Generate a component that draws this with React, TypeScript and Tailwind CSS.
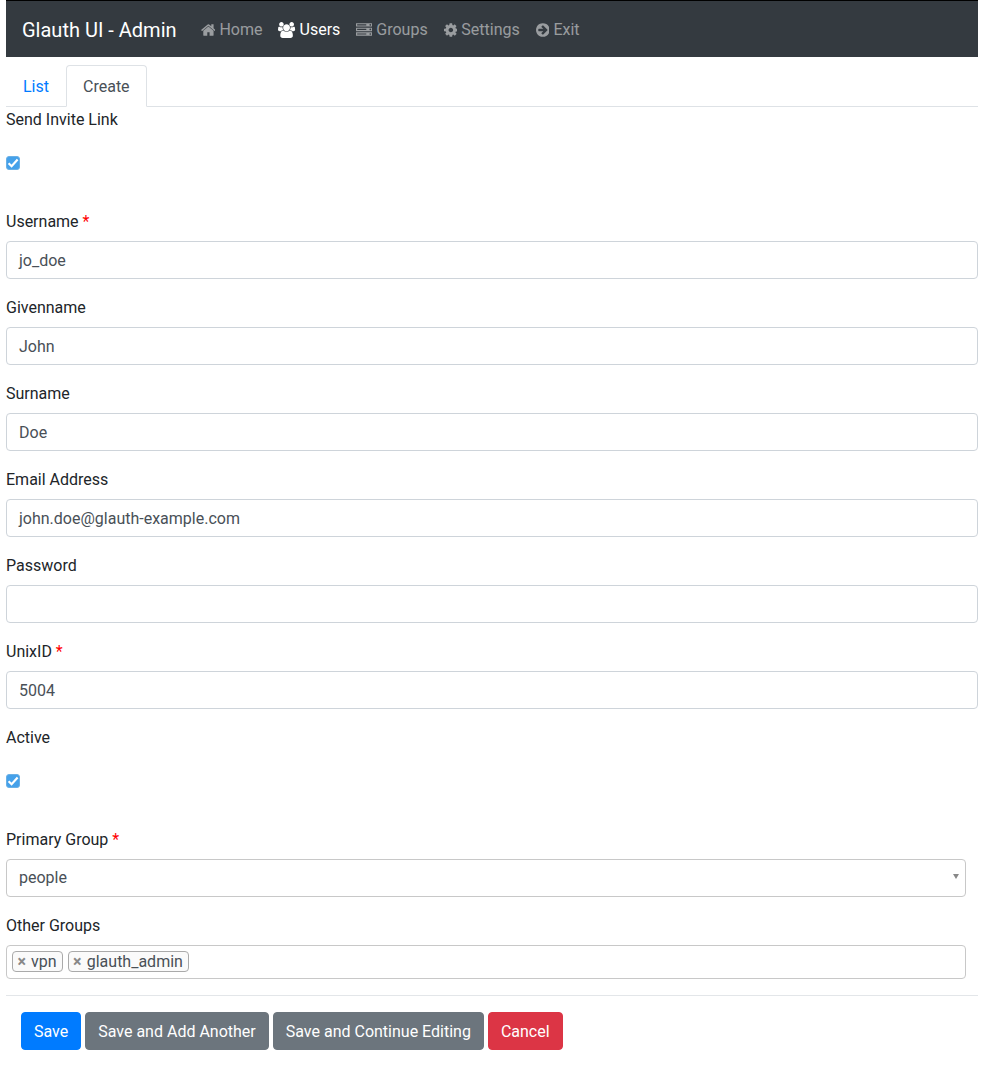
function Label({ text, req }: { text: string; req?: boolean }) {
  return (
    <label className="mb-2 block h-6 pt-[1px] leading-6">
      {text}
      {req && <span className="text-[#ff0000]"> *</span>}
    </label>
  );
}

function Field({ label, value, req }: { label: string; value: string; req?: boolean }) {
  return (
    <div className="mb-4">
      <Label text={label} req={req} />
      <div className="flex h-[38px] items-center rounded border border-[#ced4da] bg-white px-3 pt-[2px] text-[#495057]">
        {value}
      </div>
    </div>
  );
}

function Check({ label }: { label: string }) {
  return (
    <div className="mb-4">
      <Label text={label} />
      <div className="flex h-[54px] items-start pt-[17px]">
        <div className="relative h-[14px] w-[14px]">
          <input
            type="checkbox"
            defaultChecked
            className="m-0 block h-[14px] w-[14px] appearance-none rounded-[3px] border border-[#6ab0e6] bg-[#45a1ea]"
          />
          <svg viewBox="0 0 14 14" className="pointer-events-none absolute inset-0 h-[14px] w-[14px]">
            <path d="M2.6 7.2 L5.6 10.2 L11.6 3.6" fill="none" stroke="#ffffff" strokeWidth="2.2" />
          </svg>
        </div>
      </div>
    </div>
  );
}

function NavItem({ icon, text, active }: { icon: React.ReactNode; text: string; active?: boolean }) {
  return (
    <a className={`flex items-center gap-[3.97px] px-2 pt-[2px] ${active ? "text-white" : "text-[#ffffff80]"}`}>
      {icon}
      <span>{text}</span>
    </a>
  );
}

function Fa({ d, vb, w }: { d: string; vb: string; w: string }) {
  return (
    <svg viewBox={vb} className={`h-4 shrink-0 fill-current ${w}`}>
      <path d={d} />
    </svg>
  );
}

const HOME =
  "M1472 992v480q0 26-19 45t-45 19h-384v-384h-256v384h-384q-26 0-45-19t-19-45v-480q0-1 .5-3t.5-3l575-474 575 474q1 2 1 6zm223-69l-62 74q-8 9-21 11h-3q-13 0-21-7l-692-577-692 577q-12 8-24 7-13-2-21-11l-62-74q-8-10-7-23.500t11-21.500l719-599q32-26 76-26t76 26l244 204v-195q0-14 9-23t23-9h192q14 0 23 9t9 23v408l219 182q10 8 11 21.500t-7 23.500z";
const USERS =
  "M593 896q-162 5-265 128h-134q-82 0-138-40.500t-56-118.500q0-353 124-353 6 0 43.500 21t97.500 42.500 119 21.500q67 0 133-23-5 37-5 66 0 139 81 256zm1071 637q0 120-73 189.500t-194 69.500h-874q-121 0-194-69.500t-73-189.500q0-53 3.500-103.500t14-109 26.500-108.500 43-97.500 62-81 85.500-53.500 111.500-20q10 0 43 21.500t73 48 107 48 135 21.500 135-21.500 107-48 73-48 43-21.500q61 0 111.500 20t85.500 53.500 62 81 43 97.500 26.500 108.500 14 109 3.500 103.500zm-1024-1277q0 106-75 181t-181 75-181-75-75-181 75-181 181-75 181 75 75 181zm704 384q0 159-112.500 271.500t-271.500 112.500-271.500-112.500-112.500-271.500 112.500-271.500 271.500-112.500 271.500 112.500 112.500 271.500zm576 225q0 78-56 118.500t-138 40.500h-134q-103-123-265-128 81-117 81-256 0-29-5-66 66 23 133 23 59 0 119-21.500t97.500-42.500 43.500-21q124 0 124 353zm-128-609q0 106-75 181t-181 75-181-75-75-181 75-181 181-75 181 75 75 181z";
const SERVER =
  "M128 1408h1024v-128h-1024v128zm0-512h1024v-128h-1024v128zm1568 448q0-40-28-68t-68-28-68 28-28 68 28 68 68 28 68-28 28-68zm-1568-960h1024v-128h-1024v128zm1568 448q0-40-28-68t-68-28-68 28-28 68 28 68 68 28 68-28 28-68zm0-512q0-40-28-68t-68-28-68 28-28 68 28 68 68 28 68-28 28-68zm96 832v384h-1792v-384h1792zm0-512v384h-1792v-384h1792zm0-512v384h-1792v-384h1792z";
const COG =
  "M1152 896q0-106-75-181t-181-75-181 75-75 181 75 181 181 75 181-75 75-181zm512-109v222q0 12-8 23t-20 13l-185 28q-19 54-39 91 35 50 107 138 10 12 10 25t-9 23q-27 37-99 108t-94 71q-12 0-26-9l-138-108q-44 23-91 38-16 136-29 186-7 28-36 28h-222q-14 0-24.500-8.500t-11.500-21.500l-28-184q-49-16-90-37l-141 107q-10 9-25 9-14 0-25-11-126-114-165-168-7-10-7-23 0-12 8-23 15-21 51-66.500t54-70.500q-27-50-41-99l-183-27q-13-2-21-12.500t-8-23.500v-222q0-12 8-23t19-13l186-28q14-46 39-92-40-57-107-138-10-12-10-24 0-10 9-23 26-36 98.500-107.500t94.500-71.500q13 0 26 10l138 107q44-23 91-38 16-136 29-186 7-28 36-28h222q14 0 24.500 8.500t11.500 21.500l28 184q49 16 90 37l142-107q9-9 24-9 13 0 25 10 129 119 165 170 7 8 7 22 0 12-8 23-15 21-51 66.500t-54 70.500q26 50 41 98l183 28q13 2 21 12.500t8 23.500z";
const EXIT =
  "M1285 896q0-27-18-45l-91-91-362-362q-18-18-45-18t-45 18l-91 91q-18 18-18 45t18 45l189 189h-502q-26 0-45 19t-19 45v128q0 26 19 45t45 19h502l-189 189q-19 19-19 45t19 45l91 91q18 18 45 18t45-18l362-362 91-91q18-18 18-45zm251 0q0 209-103 385.500t-279.500 279.500-385.500 103-385.500-103-279.500-279.500-103-385.500 103-385.500 279.500-279.500 385.500-103 385.500 103 279.500 279.500 103 385.500z";

function Tag({ text }: { text: string }) {
  return (
    <span className="flex h-[21px] items-center rounded-[4px] border border-[#aaaaaa] bg-[#fafafa] pl-[4.4px] pr-[5px] text-[#495057]">
      <span className="mr-[5.2px] text-[16px] font-bold leading-none text-[#888888]">×</span>
      {text}
    </span>
  );
}

function Btn({ text, color }: { text: string; color: string }) {
  return <button className={`h-[38px] rounded border px-3 pt-[2px] text-white ${color}`}>{text}</button>;
}

export default function App() {
  return (
    <div className="min-h-[1066px] bg-white px-[6px] text-[16px] leading-6 text-[#212529] [font-family:Roboto,sans-serif]">
      <nav className="flex h-[57px] items-center border-t border-black bg-[#343a40] px-4">
        <span className="mr-4 pt-[2px] text-[20px] text-white">Glauth UI - Admin</span>
        <NavItem icon={<Fa d={HOME} vb="64 0 1664 1792" w="w-[14.86px]" />} text="Home" />
        <NavItem icon={<Fa d={USERS} vb="0 0 1920 1792" w="w-[17.14px]" />} text="Users" active />
        <NavItem icon={<Fa d={SERVER} vb="0 0 1792 1792" w="w-4" />} text="Groups" />
        <NavItem icon={<Fa d={COG} vb="128 0 1536 1792" w="w-[13.71px]" />} text="Settings" />
        <NavItem icon={<Fa d={EXIT} vb="0 0 1536 1792" w="w-[13.71px]" />} text="Exit" />
      </nav>
      <ul className="mt-2 flex h-[42px] border-b border-[#dee2e6]">
        <li className="flex h-[42px] items-center px-[17px] pt-[2px] text-[#007bff]">List</li>
        <li className="flex h-[42px] items-center rounded-t border border-[#dee2e6] border-b-white bg-white px-4 pt-[2px] text-[#495057]">
          Create
        </li>
      </ul>
      <Check label="Send Invite Link" />
      <Field label="Username" value="jo_doe" req />
      <Field label="Givenname" value="John" />
      <Field label="Surname" value="Doe" />
      <Field label="Email Address" value="john.doe@glauth-example.com" />
      <Field label="Password" value="" />
      <Field label="UnixID" value="5004" req />
      <Check label="Active" />
      <div className="mb-4 mr-3">
        <Label text="Primary Group" req />
        <div className="relative flex h-[38px] items-center rounded border border-[#c8c8c8] bg-white px-3 text-[#495057]">
          people
          <span className="absolute right-[6px] top-[14px] border-x-[3.5px] border-t-[5px] border-x-transparent border-t-[#888888]" />
        </div>
      </div>
      <div className="mb-4 mr-3">
        <Label text="Other Groups" />
        <div className="flex h-[34px] items-center gap-[5px] rounded border border-[#c8c8c8] bg-white px-[5px] pb-[1px]">
          <Tag text="vpn" />
          <Tag text="glauth_admin" />
        </div>
      </div>
      <hr className="border-t border-[#e3e6e9]" />
      <div className="mt-4 flex gap-1 pl-[15px]">
        <Btn text="Save" color="border-[#007bff] bg-[#007bff]" />
        <Btn text="Save and Add Another" color="border-[#6c757d] bg-[#6c757d]" />
        <Btn text="Save and Continue Editing" color="border-[#6c757d] bg-[#6c757d]" />
        <Btn text="Cancel" color="border-[#dc3545] bg-[#dc3545]" />
      </div>
    </div>
  );
}
